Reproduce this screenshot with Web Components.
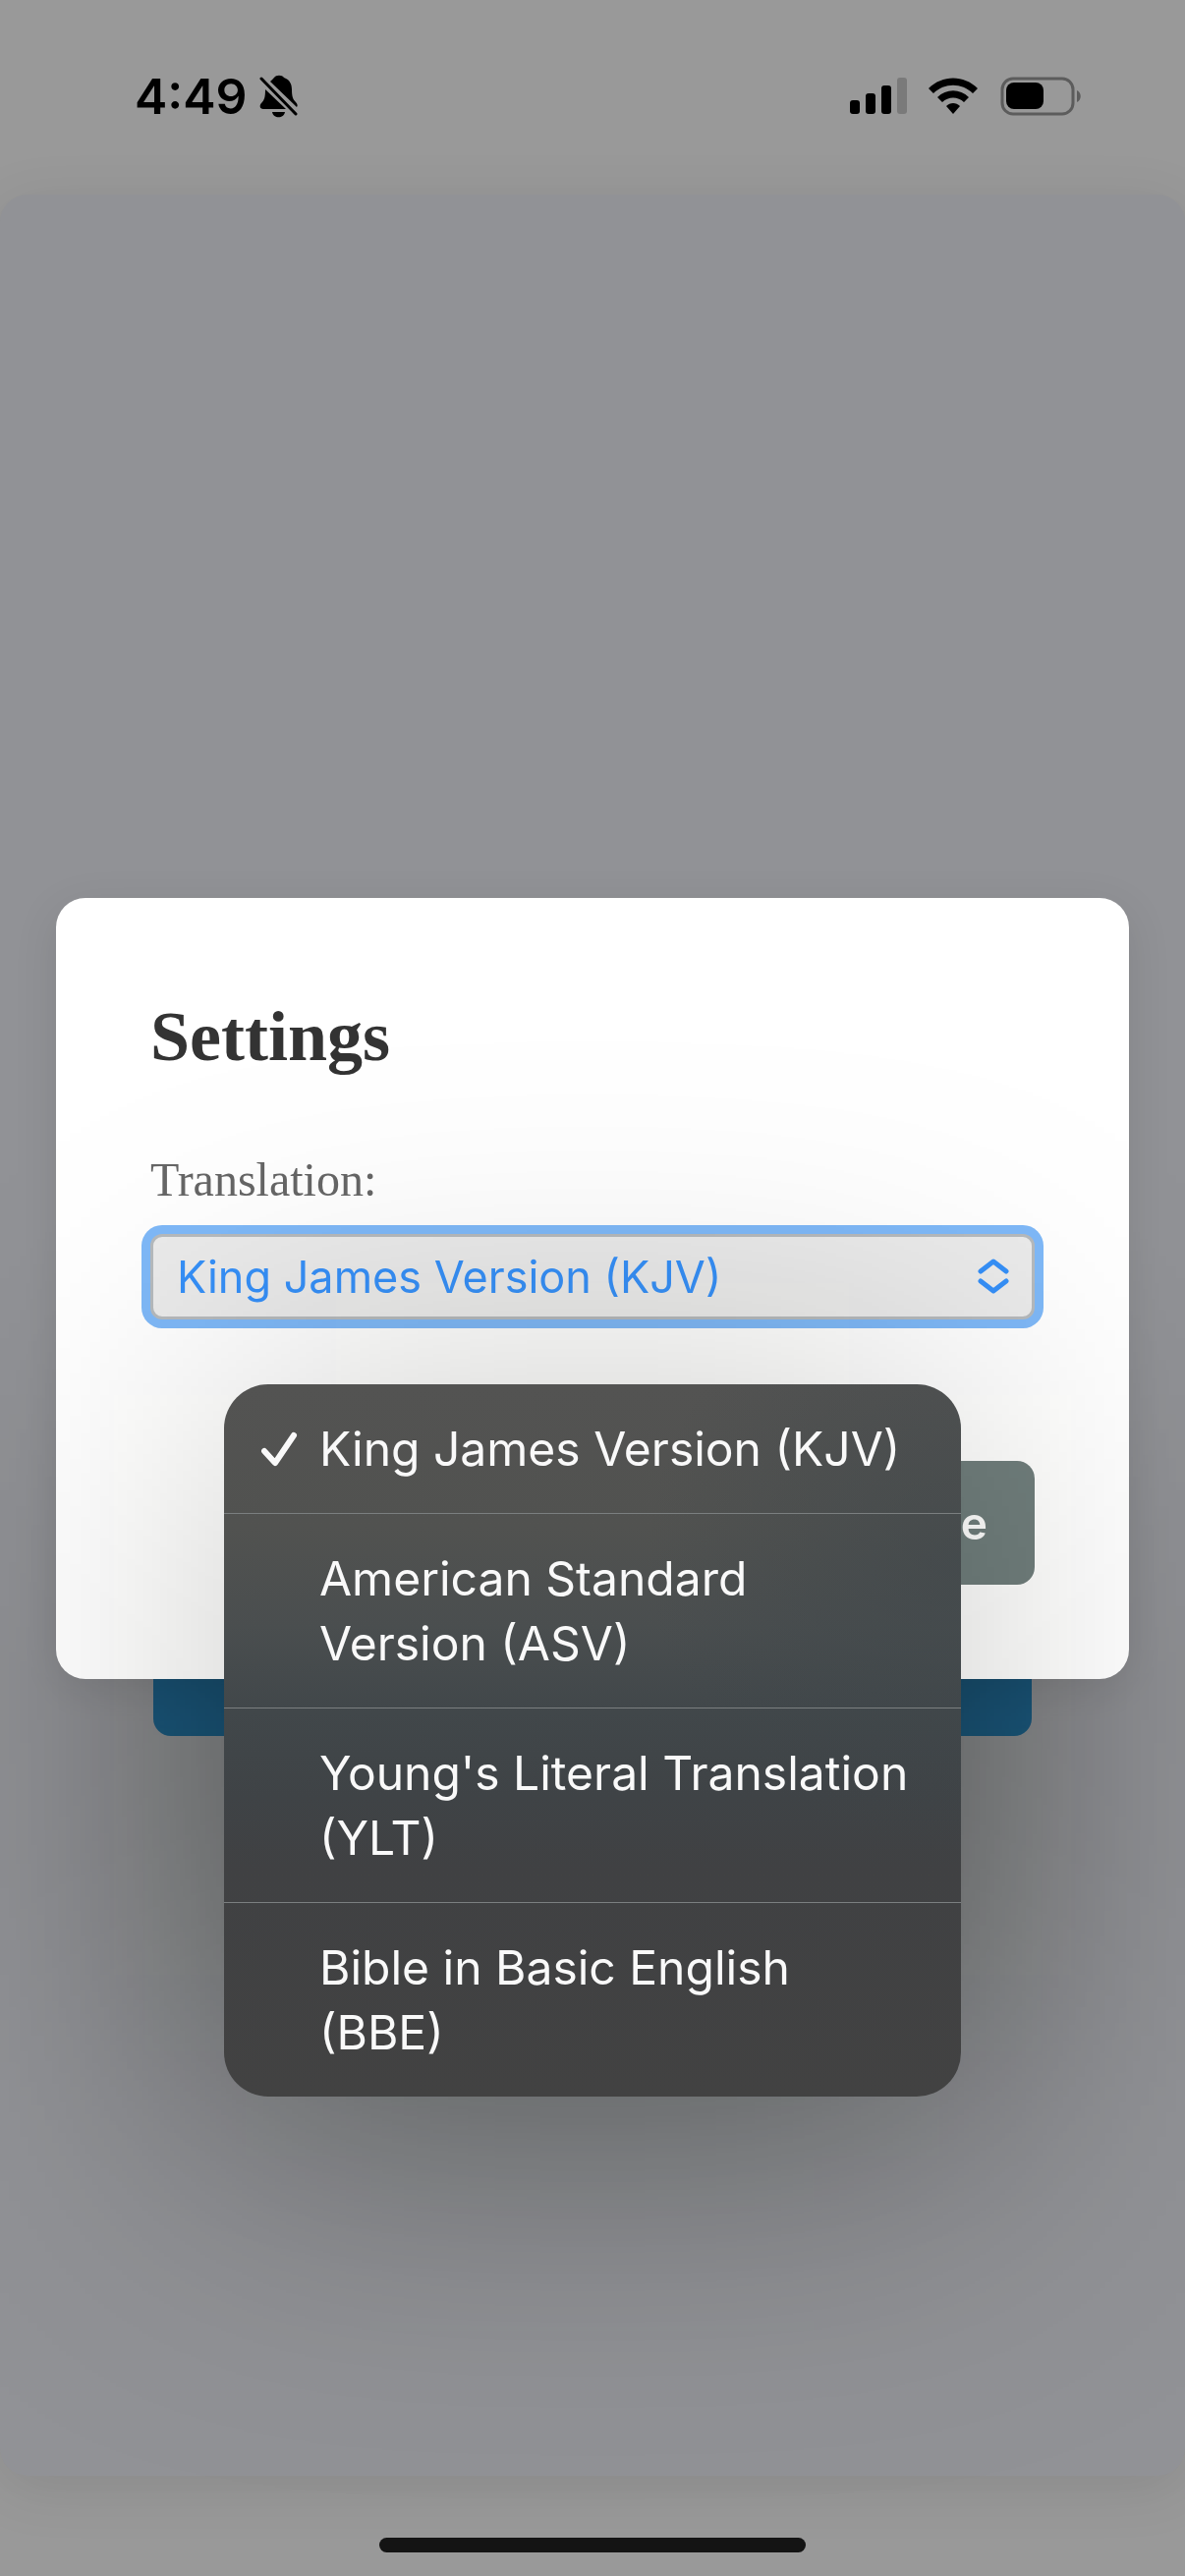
<!DOCTYPE html>
<html lang="en">
<head>
<meta charset="utf-8">
<meta name="viewport" content="width=device-width, initial-scale=1">
<title>Settings</title>
<style>
  body {
    margin: 0;
    min-height: 100vh;
    display: flex;
    flex-direction: column;
    background: #999;
    font-family: Inter, "Liberation Sans", sans-serif;
  }
</style>
</head>
<body>
<status-bar time="4:49"></status-bar>
<page-card></page-card>
<home-indicator></home-indicator>
<settings-dialog heading="Settings">
  <select-field label="Translation:">
    <menu-option selected>King James Version (KJV)</menu-option>
    <menu-option>American Standard Version (ASV)</menu-option>
    <menu-option>Young's Literal Translation (YLT)</menu-option>
    <menu-option>Bible in Basic English (BBE)</menu-option>
  </select-field>
  <action-button slot="actions">Close</action-button>
</settings-dialog>

<script>
function makeTemplate(html) {
  const template = document.createElement('template');
  template.innerHTML = html;
  return template;
}

const statusBarTemplate = makeTemplate(`
  <style>
    :host {
      display: flex;
      justify-content: space-between;
      align-items: center;
      box-sizing: border-box;
      height: 198px;
      padding: 0 106px 2px 137px;
      color: #000;
    }
    div {
      display: flex;
      align-items: center;
    }
    .left { gap: 12px; }
    .right { gap: 22px; }
    .time {
      font-size: 50px;
      font-weight: 600;
      line-height: 60px;
    }
    svg { display: block; }
  </style>
  <div class="left">
    <span class="time"></span>
    <svg width="40" height="44" viewBox="0 0 40 44" aria-label="Silent">
      <path d="M11 7C13 5 14 4 15 3C17 0 23 0 25 3C31 5 33 10 33 15C33 22 34 25 37 28C39 30 39 32 38 33Z"/>
      <path d="M6 15L27 35H4C0 35 0 31 2 29C5 26 6 23 6 15Z"/>
      <path d="M13 38H26C25 45 14 45 13 38Z"/>
      <path d="M2 4L37 40" stroke="#000" stroke-width="3" stroke-linecap="round"/>
    </svg>
  </div>
  <div class="right">
    <svg width="58" height="38" viewBox="0 0 58 38" aria-label="Signal">
      <rect x="0" y="23" width="10" height="14" rx="3"/>
      <rect x="16" y="16" width="10" height="21" rx="3"/>
      <rect x="32" y="8" width="10" height="29" rx="3"/>
      <rect x="48" y="0" width="10" height="37" rx="3" fill="#7a7a7a"/>
    </svg>
    <svg width="51" height="38" viewBox="0 0 51 38" aria-label="Wi-Fi">
      <path d="M0 11C14 -3 36 -3 50 11L45 16C34 5 16 5 5 16Z"/>
      <path d="M9 20C18 11 32 11 41 20L36 25C30 19 20 19 14 25Z"/>
      <path d="M18 29C22 25 28 25 32 29L25 37Z"/>
    </svg>
    <svg width="82" height="40" viewBox="0 0 82 40" aria-label="Battery">
      <rect x="2" y="2" width="72" height="36" rx="11" fill="none" stroke="#5c5c5c" stroke-width="3"/>
      <rect x="6" y="6" width="38" height="27" rx="8"/>
      <path d="M78 14C83 16 83 24 78 26Z" fill="#5c5c5c"/>
    </svg>
  </div>
`);

class StatusBar extends HTMLElement {
  constructor() {
    super();
    this.attachShadow({ mode: 'open' });
    this.shadowRoot.appendChild(statusBarTemplate.content.cloneNode(true));
    this.shadowRoot.querySelector('.time').textContent = this.getAttribute('time');
  }
}

// the dimmed page behind the dialog; only the foot of its main button shows
const pageCardTemplate = makeTemplate(`
  <style>
    :host {
      display: grid;
      grid-template-rows: 1443px 126px;
      flex: 1;
      box-sizing: border-box;
      padding: 0 156px;
      border-radius: 28px;
      background: #919296;
      box-shadow: 0 12px 60px rgba(0, 0, 0, 0.1);
    }
    .bar {
      grid-row: 2;
      border-radius: 18px;
      background: #1b5c84;
    }
  </style>
  <div class="bar"></div>
`);

class PageCard extends HTMLElement {
  constructor() {
    super();
    this.attachShadow({ mode: 'open' });
    this.shadowRoot.appendChild(pageCardTemplate.content.cloneNode(true));
  }
}

const homeIndicatorTemplate = makeTemplate(`
  <style>
    :host {
      display: flex;
      justify-content: center;
      align-items: flex-end;
      box-sizing: border-box;
      height: 102px;
      padding-bottom: 24px;
    }
    div {
      width: 36%;
      height: 15px;
      border-radius: 8px;
      background: #141414;
    }
  </style>
  <div></div>
`);

class HomeIndicator extends HTMLElement {
  constructor() {
    super();
    this.attachShadow({ mode: 'open' });
    this.shadowRoot.appendChild(homeIndicatorTemplate.content.cloneNode(true));
  }
}

const dialogTemplate = makeTemplate(`
  <style>
    :host {
      position: fixed;
      inset: 0;
      display: flex;
      justify-content: center;
      align-items: center;
      padding: 0 57px;
    }
    section {
      position: relative;
      isolation: isolate;
      flex: 1;
    }
    /* shade of the open menu on the dimmed page, under the panel */
    section::before {
      content: "";
      position: absolute;
      z-index: -1;
      inset: 525px 141px -486px;
      background: rgba(0, 12, 0, 0.3);
      filter: blur(160px);
    }
    .panel {
      padding: 96px;
      border-radius: 30px;
      background: #fff;
      box-shadow: 0 12px 45px rgba(0, 0, 0, 0.1);
    }
    h2 {
      margin: 0 0 72px;
      font: bold 72px/91px "Liberation Serif", serif;
      color: #333;
    }
    .actions {
      display: flex;
      justify-content: flex-end;
      margin-top: 144px;
    }
  </style>
  <section role="dialog" aria-labelledby="heading">
    <div class="panel">
      <h2 id="heading"></h2>
      <slot></slot>
      <div class="actions"><slot name="actions"></slot></div>
    </div>
  </section>
`);

class SettingsDialog extends HTMLElement {
  constructor() {
    super();
    this.attachShadow({ mode: 'open' });
    this.shadowRoot.appendChild(dialogTemplate.content.cloneNode(true));
    this.shadowRoot.querySelector('h2').textContent = this.getAttribute('heading');
  }
}

const selectFieldTemplate = makeTemplate(`
  <style>
    :host { display: block; }
    label {
      display: block;
      margin-bottom: 28px;
      font: 48px/55px "Liberation Serif", serif;
      color: #666;
    }
    .field {
      position: relative;
      display: grid;
      align-items: center;
    }
    select, .chevrons { grid-area: 1 / 1; }
    select {
      appearance: none;
      box-sizing: border-box;
      width: 100%;
      height: 87px;
      margin: 0;
      padding: 0 90px 0 24px;
      border: 3px solid #b6babd;
      border-radius: 12px;
      outline: none;
      background: #ebebeb;
      box-shadow: 0 0 0 9px #7fb9f8;
      font: 45px Inter, "Liberation Sans", sans-serif;
      color: #3690f8;
    }
    .chevrons {
      justify-self: end;
      margin-right: 26px;
      pointer-events: none;
    }
    .menu {
      position: absolute;
      z-index: 1;
      top: 153px;
      left: 75px;
      right: 75px;
      overflow: hidden;
      border-radius: 45px;
      background:
        radial-gradient(ellipse 320px 300px at 100% 24%, rgba(62, 70, 74, 0.6), rgba(62, 70, 74, 0)),
        linear-gradient(#535352, #515250 20%, #4a4e4f 34%, #41474a 46%, #3f4346 58%, #404143 68%, #424242);
    }
    .shade {
      position: absolute;
      inset: 163px 75px -668px;
      background: rgba(8, 8, 0, 0.22);
      filter: blur(170px);
      pointer-events: none;
    }
  </style>
  <label for="choice"></label>
  <div class="field">
    <select id="choice"></select>
    <svg class="chevrons" width="32" height="36" viewBox="0 0 32 36" fill="none" stroke="#3690f8" stroke-width="5" stroke-linecap="round" stroke-linejoin="round">
      <path d="M3 13L16 3L29 13"/>
      <path d="M3 23L16 33L29 23"/>
    </svg>
    <div class="shade"></div>
    <div class="menu" role="listbox"><slot></slot></div>
  </div>
`);

class SelectField extends HTMLElement {
  constructor() {
    super();
    this.attachShadow({ mode: 'open' });
    this.shadowRoot.appendChild(selectFieldTemplate.content.cloneNode(true));
    this.shadowRoot.querySelector('label').textContent = this.getAttribute('label');

    const select = this.shadowRoot.querySelector('select');
    this.querySelectorAll('menu-option').forEach((item) => {
      select.add(new Option(item.textContent, item.textContent, false, item.hasAttribute('selected')));
    });
  }
}

const menuOptionTemplate = makeTemplate(`
  <style>
    :host {
      display: block;
      border-bottom: 1px solid #7b7f80;
    }
    :host(:last-child) { border-bottom: 0; }
    button {
      display: grid;
      grid-template-columns: 59px 1fr;
      align-items: start;
      width: 100%;
      margin: 0;
      padding: 33px 36px 32px 38px;
      border: 0;
      background: none;
      font: 48px/66px Inter, "Liberation Sans", sans-serif;
      text-align: left;
      color: #f9f9f9;
    }
    svg {
      visibility: hidden;
      margin-top: 15px;
    }
    :host([selected]) svg { visibility: visible; }
  </style>
  <button type="button" role="option">
    <svg width="37" height="38" viewBox="0 0 37 38" fill="none" stroke="#f9f9f9" stroke-width="6" stroke-linecap="round" stroke-linejoin="round">
      <path d="M3 20L14 32L33 4"/>
    </svg>
    <span><slot></slot></span>
  </button>
`);

class MenuOption extends HTMLElement {
  constructor() {
    super();
    this.attachShadow({ mode: 'open' });
    this.shadowRoot.appendChild(menuOptionTemplate.content.cloneNode(true));
    this.shadowRoot.querySelector('button').setAttribute('aria-selected', this.hasAttribute('selected'));
  }
}

const actionButtonTemplate = makeTemplate(`
  <style>
    :host { display: block; }
    button {
      height: 126px;
      padding: 0 48px;
      border: 0;
      border-radius: 18px;
      background: #707e7d;
      font: 600 46px Inter, "Liberation Sans", sans-serif;
      color: #fff;
    }
  </style>
  <button type="button"><slot></slot></button>
`);

class ActionButton extends HTMLElement {
  constructor() {
    super();
    this.attachShadow({ mode: 'open' });
    this.shadowRoot.appendChild(actionButtonTemplate.content.cloneNode(true));
  }
}

customElements.define('status-bar', StatusBar);
customElements.define('page-card', PageCard);
customElements.define('home-indicator', HomeIndicator);
customElements.define('menu-option', MenuOption);
customElements.define('select-field', SelectField);
customElements.define('action-button', ActionButton);
customElements.define('settings-dialog', SettingsDialog);
</script>
</body>
</html>
